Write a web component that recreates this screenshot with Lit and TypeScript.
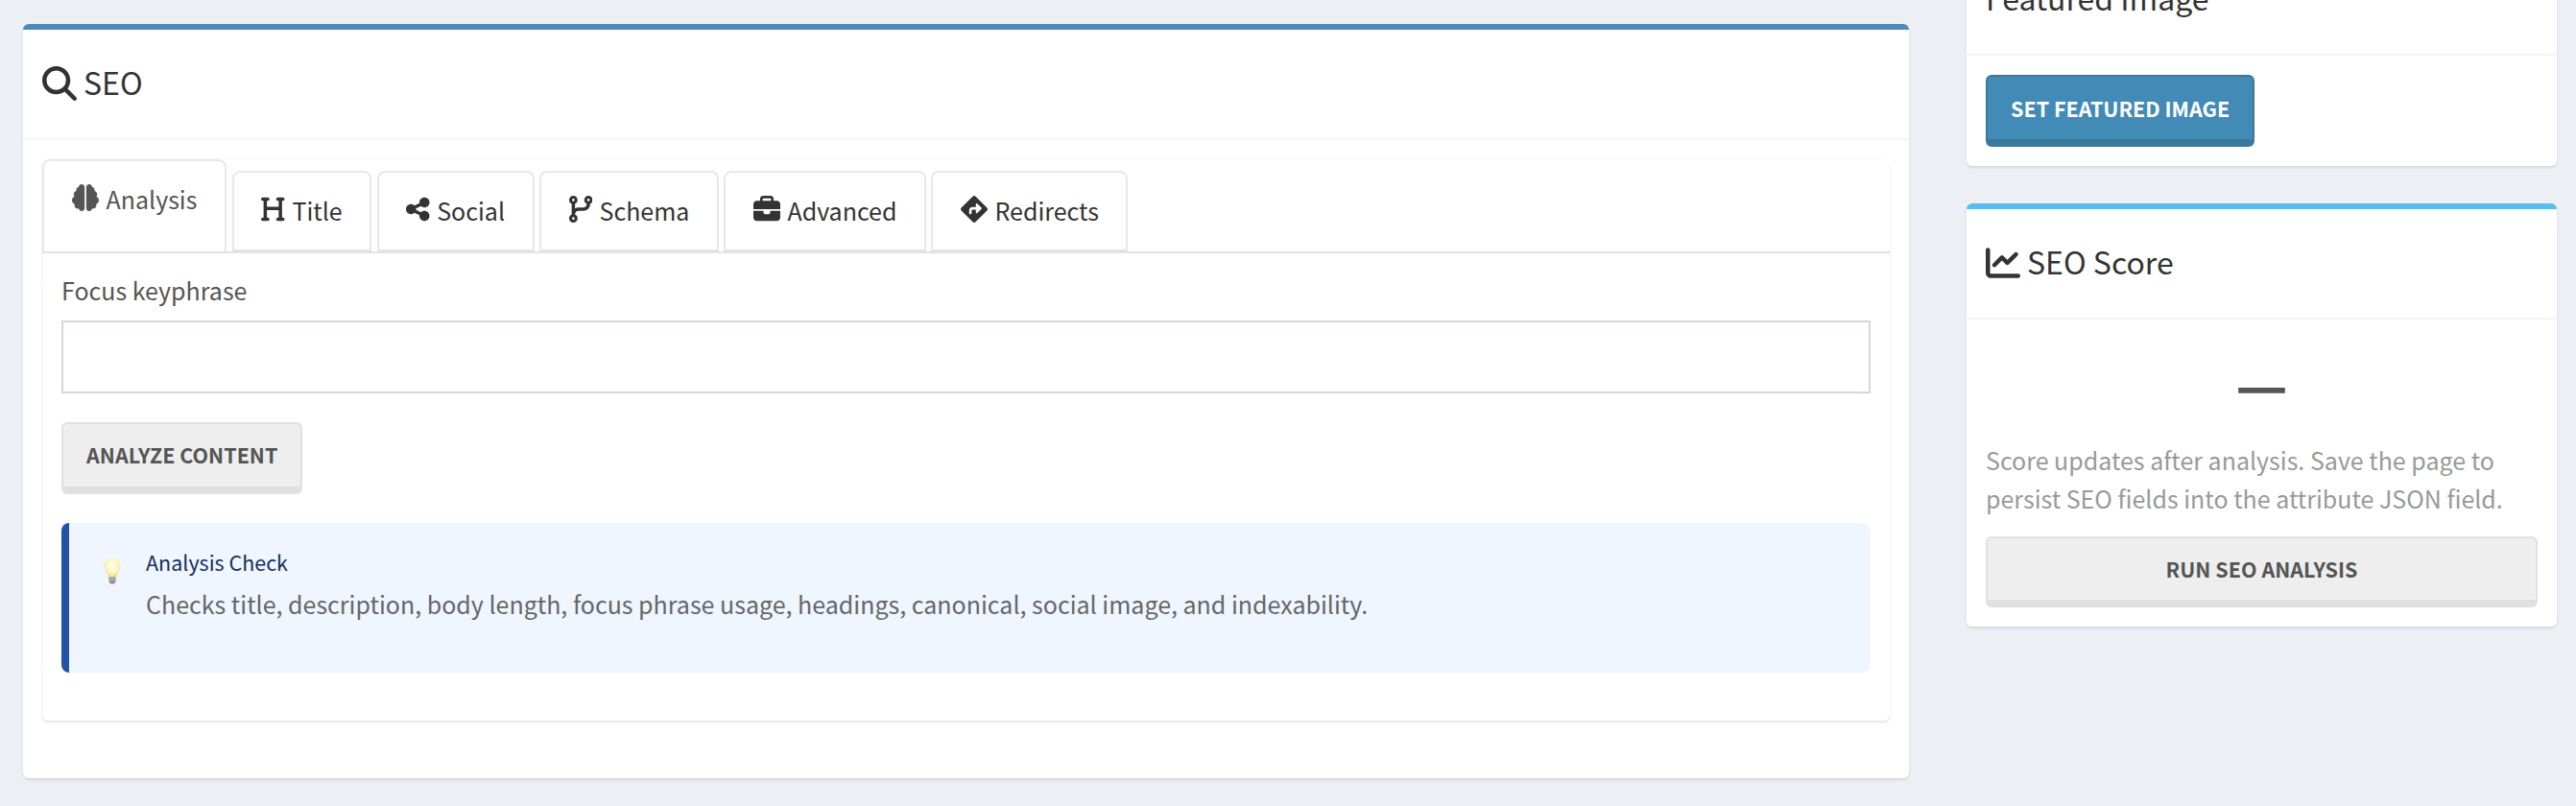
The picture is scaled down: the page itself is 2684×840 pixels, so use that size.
import { LitElement, html, css, svg } from 'lit';
import { customElement } from 'lit/decorators.js';

// Font Awesome 6 solid shapes used by the screen: [viewBox width, path]
const ICONS: Record<string, [number, string]> = {
  search: [512, 'M416 208c0 45.9-14.9 88.3-40 122.7L502.6 457.4c12.5 12.5 12.5 32.8 0 45.3s-32.8 12.5-45.3 0L330.7 376c-34.4 25.2-76.8 40-122.7 40C93.1 416 0 322.9 0 208S93.1 0 208 0S416 93.1 416 208zM208 352a144 144 0 1 0 0-288 144 144 0 1 0 0 288z'],
  brain: [512, 'M184 0c30.9 0 56 25.1 56 56V456c0 30.9-25.1 56-56 56c-28.9 0-52.7-21.9-55.7-50.1c-5.2 1.4-10.7 2.1-16.3 2.1c-35.3 0-64-28.7-64-64c0-7.4 1.3-14.6 3.6-21.2C21.4 367.4 0 338.2 0 304c0-31.9 18.7-59.5 45.8-72.3C37.1 220.8 32 207 32 192c0-30.7 21.6-56.3 50.4-62.6C80.8 123.9 80 118 80 112c0-29.9 20.6-55.1 48.3-62.1C131.3 21.9 155.1 0 184 0zM328 0c28.9 0 52.6 21.9 55.7 49.9c27.8 7 48.3 32.1 48.3 62.1c0 6-.8 11.9-2.4 17.4c28.8 6.2 50.4 31.9 50.4 62.6c0 15-5.1 28.8-13.8 39.7C493.3 244.5 512 272.1 512 304c0 34.2-21.4 63.4-51.6 74.8c2.3 6.6 3.6 13.8 3.6 21.2c0 35.3-28.7 64-64 64c-5.6 0-11.1-.7-16.3-2.1c-3 28.2-26.8 50.1-55.7 50.1c-30.9 0-56-25.1-56-56V56c0-30.9 25.1-56 56-56z'],
  heading: [448, 'M0 64C0 46.3 14.3 32 32 32H80h48c17.7 0 32 14.3 32 32s-14.3 32-32 32H112V208H336V96H320c-17.7 0-32-14.3-32-32s14.3-32 32-32h48 48c17.7 0 32 14.3 32 32s-14.3 32-32 32H400V240 416h16c17.7 0 32 14.3 32 32s-14.3 32-32 32H368 320c-17.7 0-32-14.3-32-32s14.3-32 32-32h16V272H112V416h16c17.7 0 32 14.3 32 32s-14.3 32-32 32H80 32c-17.7 0-32-14.3-32-32s14.3-32 32-32H48V240 96H32C14.3 96 0 81.7 0 64z'],
  share: [448, 'M352 224c53 0 96-43 96-96s-43-96-96-96s-96 43-96 96c0 4 .2 8 .7 11.9l-94.1 47C145.4 170.2 121.9 160 96 160c-53 0-96 43-96 96s43 96 96 96c25.9 0 49.4-10.2 66.6-26.9l94.1 47c-.5 3.9-.7 7.8-.7 11.9c0 53 43 96 96 96s96-43 96-96s-43-96-96-96c-25.9 0-49.4 10.2-66.6 26.9l-94.1-47c.5-3.9 .7-7.8 .7-11.9s-.2-8-.7-11.9l94.1-47C302.6 213.8 326.1 224 352 224z'],
  branch: [448, 'M80 104a24 24 0 1 0 0-48 24 24 0 1 0 0 48zm80-24c0 32.8-19.7 61-48 73.3v87.8c18.8-10.9 40.7-17.1 64-17.1h96c35.3 0 64-28.7 64-64v-6.7C307.7 141 288 112.8 288 80c0-44.2 35.8-80 80-80s80 35.8 80 80c0 32.8-19.7 61-48 73.3V160c0 70.7-57.3 128-128 128H176c-35.3 0-64 28.7-64 64v6.7c28.3 12.3 48 40.5 48 73.3c0 44.2-35.8 80-80 80s-80-35.8-80-80c0-32.8 19.7-61 48-73.3V352 153.3C19.7 141 0 112.8 0 80C0 35.8 35.8 0 80 0s80 35.8 80 80zm232 0a24 24 0 1 0 -48 0 24 24 0 1 0 48 0zM80 456a24 24 0 1 0 0-48 24 24 0 1 0 0 48z'],
  briefcase: [512, 'M184 48H328c4.4 0 8 3.6 8 8V96H176V56c0-4.4 3.6-8 8-8zm-56 8V96H64C28.7 96 0 124.7 0 160v96H192 320 512V160c0-35.3-28.7-64-64-64H384V56c0-30.9-25.1-56-56-56H184c-30.9 0-56 25.1-56 56zM512 288H320v32c0 17.7-14.3 32-32 32H224c-17.7 0-32-14.3-32-32V288H0V416c0 35.3 28.7 64 64 64H448c35.3 0 64-28.7 64-64V288z'],
  directions: [512, 'M227.7 11.7c15.6-15.6 40.9-15.6 56.6 0l216 216c15.6 15.6 15.6 40.9 0 56.6l-216 216c-15.6 15.6-40.9 15.6-56.6 0l-216-216c-15.6-15.6-15.6-40.9 0-56.6l216-216zm87.6 137c-4.6-4.6-11.5-5.9-17.4-3.5s-9.9 8.3-9.9 14.8v56H224c-35.3 0-64 28.7-64 64v48c0 13.3 10.7 24 24 24s24-10.7 24-24V280c0-8.8 7.2-16 16-16h64v56c0 6.5 3.9 12.3 9.9 14.8s12.9 1.1 17.4-3.5l80-80c6.2-6.2 6.2-16.4 0-22.6l-80-80z'],
  chart: [512, 'M64 64c0-17.7-14.3-32-32-32S0 46.3 0 64V400c0 44.2 35.8 80 80 80H480c17.7 0 32-14.3 32-32s-14.3-32-32-32H80c-8.8 0-16-7.2-16-16V64zm406.6 86.6c12.5-12.5 12.5-32.8 0-45.3s-32.8-12.5-45.3 0L320 210.7l-57.4-57.4c-12.5-12.5-32.8-12.5-45.3 0l-112 112c-12.5 12.5-12.5 32.8 0 45.3s32.8 12.5 45.3 0L240 221.3l57.4 57.4c12.5 12.5 32.8 12.5 45.3 0l128-128z'],
};

const icon = (name: string) => {
  const [w, d] = ICONS[name];
  return html`<svg class="icon ${name}" viewBox="0 0 ${w} 512" fill="currentColor">${svg`<path d=${d}></path>`}</svg>`;
};

const TABS = [
  { label: 'Analysis', icon: 'brain', active: true },
  { label: 'Title', icon: 'heading' },
  { label: 'Social', icon: 'share' },
  { label: 'Schema', icon: 'branch' },
  { label: 'Advanced', icon: 'briefcase' },
  { label: 'Redirects', icon: 'directions' },
];

@customElement('app-root')
export class AppRoot extends LitElement {
  static styles = css`
    :host {
      display: block;
      height: 840px;
      overflow: hidden;
      background: #ecf0f5;
      color: #333;
      font-family: 'Noto Sans CJK SC', 'Open Sans', sans-serif;
      font-size: 25px;
      line-height: 40px;
    }
    .page {
      display: grid;
      grid-template-columns: 1965px 615px;
      column-gap: 60px;
      align-items: start;
      padding: 25px 0 0 24px;
    }
    .box {
      background: #fff;
      border-radius: 6px;
      border-top: 6px solid transparent;
      box-shadow: 0 2px 3px rgba(0, 0, 0, 0.1);
    }
    .box.primary { border-top-color: #4f8aba; }
    .box.info { border-top-color: #58bdea; }
    .side {
      display: flex;
      flex-direction: column;
      gap: 39px;
      margin-top: -88px;
    }
    .box-head {
      display: flex;
      align-items: center;
      gap: 7px;
      box-sizing: border-box;
      height: 113px;
      padding: 0 20px 2px;
      border-bottom: 0;
      box-shadow: 0 2px 0 #f4f4f4;
      margin-bottom: 2px;
      font-size: 32px;
      line-height: 40px;
    }
    .box-head span { margin-bottom: 4px; }
    .box-body { padding: 20px; }
    .main-body { padding: 20px 20px 60px; }

    .tabs-box {
      background: #fff;
      border-radius: 6px;
      box-shadow: 0 2px 3px rgba(0, 0, 0, 0.1), 0 0 2px rgba(0, 0, 0, 0.05);
    }
    .tabs {
      display: flex;
      align-items: flex-end;
      gap: 5.5px;
      height: 96px;
      border-bottom: 2px solid #e2e2e2;
      background: #fff;
    }
    .tab {
      display: flex;
      gap: 7.5px;
      box-sizing: border-box;
      height: 84px;
      padding: 19px 28.5px 0;
      border: 2px solid #e8e8e8;
      border-bottom-color: #e2e2e2;
      border-radius: 8px 8px 0 0;
      background: #fff;
    }
    .tab.active {
      height: 96px;
      padding: 19px 29px 0;
      border-bottom: 0;
      color: #555;
    }
    .icon { height: 28px; flex: none; margin-top: 5px; }
    .box-head .icon { height: 36px; margin-top: 0; }

    .pane { padding: 18px 20px 50px; }
    label { display: block; color: #555; line-height: 40px; }
    input {
      display: block;
      box-sizing: border-box;
      width: 100%;
      height: 76px;
      margin-top: 12px;
      border: 2px solid #d2d6de;
      background: #fff;
      outline: none;
    }
    button {
      box-sizing: border-box;
      height: 75px;
      padding: 0 24px 2px;
      border: 2px solid #e0e0e0;
      border-bottom-width: 8px;
      border-radius: 6px;
      background: #eee;
      color: #555;
      font: 700 21.5px/32px 'Noto Sans CJK SC', 'Open Sans', sans-serif;
      text-transform: uppercase;
    }
    button.blue {
      padding-bottom: 0;
      border-color: #3a789c;
      background: #428bb7;
      color: #fff;
    }
    button.wide { display: block; width: 100%; height: 74px; padding-bottom: 0; }
    .analyze { display: block; margin-top: 30px; }

    .callout {
      display: flex;
      box-sizing: border-box;
      height: 156px;
      margin-top: 30px;
      padding: 22px 0 0 36px;
      border-left: 8px solid #2352ab;
      border-radius: 8px;
      background: #eff6ff;
    }
    .bulb { flex: none; width: 18px; height: 28px; margin: 14px 26px 0 0; }
    .callout h4 {
      margin: 0;
      color: #12305f;
      font-size: 21.5px;
      font-weight: 400;
      line-height: 38px;
    }
    .callout p {
      margin: 4px 0 0;
      color: #666;
      line-height: 40px;
    }

    .score {
      margin-top: 15px;
      color: #555;
      font-size: 60px;
      font-weight: 700;
      line-height: 60px;
      text-align: center;
    }
    .hint { margin: 31px 0 20px; color: #999; }
  `;

  render() {
    return html`
      <div class="page">
        <section class="box primary">
          <header class="box-head">${icon('search')}<span>SEO</span></header>
          <div class="main-body">
            <div class="tabs-box">
              <nav class="tabs">
                ${TABS.map(
                  (t) => html`<div class="tab ${t.active ? 'active' : ''}">${icon(t.icon)}<span>${t.label}</span></div>`
                )}
              </nav>
              <div class="pane">
                <label for="focus">Focus keyphrase</label>
                <input id="focus" type="text" />
                <button class="analyze">Analyze content</button>
                <div class="callout">
                  <svg class="bulb" viewBox="0 0 18 28">
                    <defs>
                      <radialGradient id="glass" cx="0.5" cy="0.4" r="0.6">
                        <stop offset="0" stop-color="#fffef2"></stop>
                        <stop offset="0.65" stop-color="#fdf3bd"></stop>
                        <stop offset="1" stop-color="#f0d675"></stop>
                      </radialGradient>
                    </defs>
                    <path d="M9 0.5C4.2 0.5 0.5 4 0.5 8.6c0 4.4 3.6 7.2 4.4 12h8.2c.8-4.8 4.4-7.6 4.4-12C17.5 4 13.8 .5 9 .5z" fill="url(#glass)"></path>
                    <path d="M5.4 20.5h7.2v4.4L10.8 27.6H7.2L5.4 24.9z" fill="#8c8f92"></path>
                    <path d="M5.4 22.2h7.2M5.4 24h7.2" stroke="#c6c8ca" stroke-width="0.8"></path>
                  </svg>
                  <div>
                    <h4>Analysis Check</h4>
                    <p>Checks title, description, body length, focus phrase usage, headings, canonical, social image, and indexability.</p>
                  </div>
                </div>
              </div>
            </div>
          </div>
        </section>

        <aside class="side">
          <section class="box">
            <header class="box-head"><span>Featured Image</span></header>
            <div class="box-body">
              <button class="blue">Set featured image</button>
            </div>
          </section>
          <section class="box info">
            <header class="box-head">${icon('chart')}<span>SEO Score</span></header>
            <div class="box-body">
              <div class="score">—</div>
              <p class="hint">Score updates after analysis. Save the page to persist SEO fields into the attribute JSON field.</p>
              <button class="wide">Run SEO analysis</button>
            </div>
          </section>
        </aside>
      </div>
    `;
  }
}
